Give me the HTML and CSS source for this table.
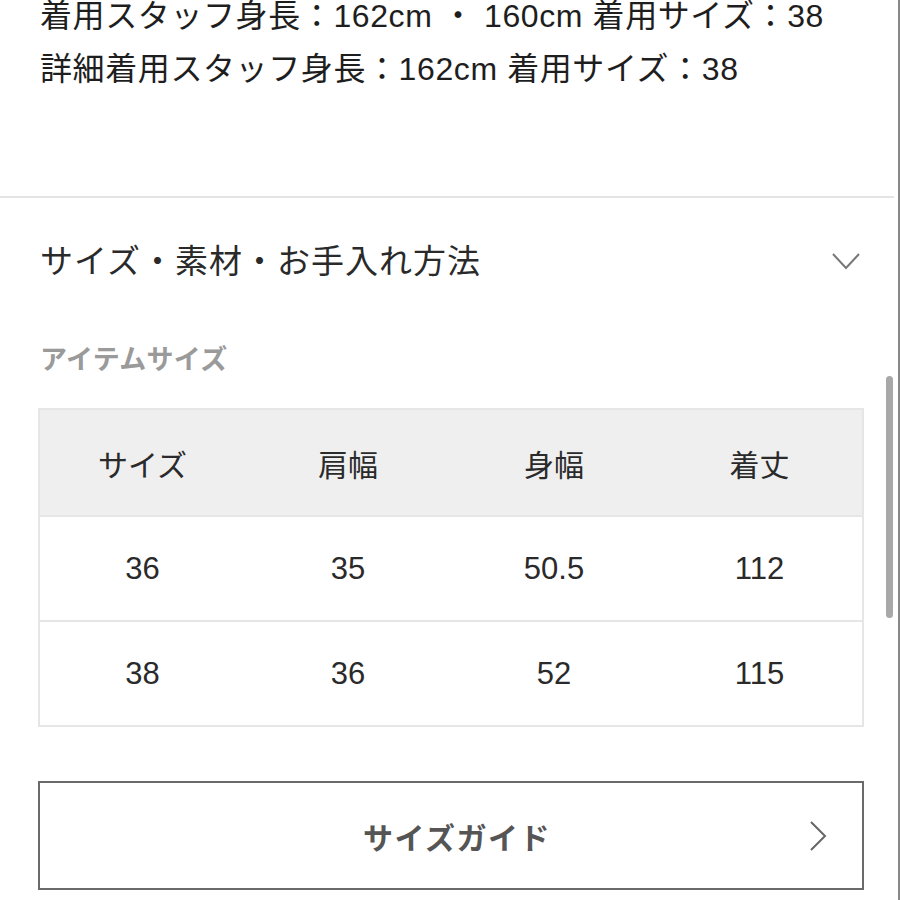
FILE: index.html
```html
<!DOCTYPE html>
<html lang="ja">
<head>
<meta charset="utf-8">
<link rel="stylesheet" href="styles.css">
</head>
<body>
<div class="page">
  <section class="staff">
    <p class="staff-line">着用スタッフ身長：162cm ・ 160cm 着用サイズ：38</p>
    <p class="staff-line">詳細着用スタッフ身長：162cm 着用サイズ：38</p>
  </section>
  <hr class="divider">
  <section class="accordion">
    <div class="acc-head">
      <h2 class="acc-title">サイズ・素材・お手入れ方法</h2>
      <svg class="chev-down" width="30" height="18" viewBox="0 0 30 18"><path d="M2 2 L15 16 L28 2" fill="none" stroke="#777" stroke-width="2"/></svg>
    </div>
    <h3 class="sub-title">アイテムサイズ</h3>
    <table class="size-table">
      <thead>
        <tr><th>サイズ</th><th>肩幅</th><th>身幅</th><th>着丈</th></tr>
      </thead>
      <tbody>
        <tr><td>36</td><td>35</td><td>50.5</td><td>112</td></tr>
        <tr><td>38</td><td>36</td><td>52</td><td>115</td></tr>
      </tbody>
    </table>
    <a class="guide-btn" href="#">
      <span class="guide-label">サイズガイド</span>
      <svg class="chev-right" width="20" height="32" viewBox="0 0 20 32"><path d="M3 2 L17 16 L3 30" fill="none" stroke="#666" stroke-width="2"/></svg>
    </a>
  </section>
  <div class="scrollbar"></div>
</div>
</body>
</html>
```
FILE: styles.css
```css
* { box-sizing: border-box; }
html, body { margin: 0; padding: 0; background: #fff; }
body {
  font-family: "Liberation Sans", "Noto Sans CJK JP", sans-serif;
  color: #222;
  width: 900px;
  height: 900px;
  overflow: hidden;
}
.page {
  position: relative;
  width: 900px;
  height: 900px;
  border-right: 2px solid #888;
}
.staff {
  padding: 0 0 0 40px;
}
.staff-line {
  margin: 0;
  font-size: 32px;
  line-height: 53px;
  letter-spacing: 0.6px;
  color: #1e1e1e;
  white-space: nowrap;
  position: relative;
  top: -10px;
}
.divider {
  margin: 90px 4px 0 0;
  border: 0;
  border-top: 2px solid #e4e4e4;
}
.accordion {
  padding: 0 37px 0 38px;
}
.acc-head {
  display: flex;
  align-items: center;
  justify-content: space-between;
  height: 122px;
  padding-left: 2px;
}
.acc-title {
  margin: 0;
  font-family: "Noto Sans CJK JP", sans-serif;
  font-size: 33px;
  font-weight: 400;
  color: #2a2a2a;
  letter-spacing: 1px;
}
.chev-down { margin-right: 0; position: relative; top: 2px; }
.sub-title {
  margin: 0;
  padding-left: 2px;
  height: 88px;
  padding-top: 8px;
  line-height: 60px;
  font-family: "Noto Sans CJK JP", sans-serif;
  font-size: 27px;
  font-weight: 700;
  letter-spacing: 0.3px;
  color: #9a9a9a;
}
.size-table {
  width: 826px;
  border-collapse: collapse;
  table-layout: fixed;
  border: 2px solid #e6e6e6;
}
.size-table th, .size-table td {
  height: 105px;
  text-align: center;
  font-weight: 400;
  color: #2a2a2a;
  border-top: 2px solid #e6e6e6;
}
.size-table thead th {
  height: 107px;
  background: #efefef;
  font-family: "Noto Sans CJK JP", sans-serif;
  font-size: 30px;
}
.size-table td {
  font-size: 31px;
}
.guide-btn {
  margin-top: 54px;
  width: 826px;
  height: 109px;
  border: 2px solid #6a6a6a;
  display: flex;
  align-items: center;
  justify-content: center;
  position: relative;
  text-decoration: none;
}
.guide-label {
  font-family: "Noto Sans CJK JP", sans-serif;
  font-size: 30px;
  font-weight: 700;
  color: #555;
  letter-spacing: 1.5px;
  position: relative;
  left: 6px;
}
.chev-right {
  position: absolute;
  right: 34px;
  top: 37px;
}
.scrollbar {
  position: absolute;
  left: 886px;
  top: 376px;
  width: 7px;
  height: 242px;
  border-radius: 4px;
  background: #a8a8a8;
}
```
